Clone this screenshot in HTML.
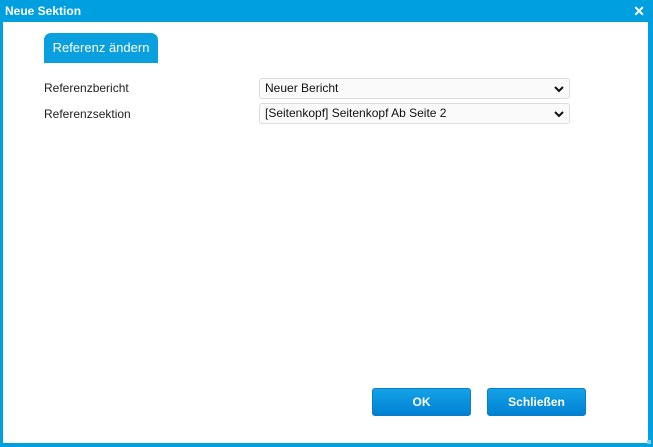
<!DOCTYPE html>
<html><head><style>
*{margin:0;padding:0;box-sizing:border-box}
body{width:653px;height:447px;background:#009fe0;font-family:"Liberation Sans",Arial,sans-serif;position:relative;overflow:hidden}
.title{position:absolute;left:5px;top:4px;color:#fff;font-weight:bold;font-size:12px}
.x{position:absolute;right:8px;top:3px;color:#fff;font-weight:bold;font-size:14px}
.main{position:absolute;left:3px;top:22px;width:645px;height:421px;background:#fff}
.tab{position:absolute;left:44px;top:33px;width:114px;height:30px;background:#0aa0df;border-radius:7px 7px 0 0;color:#fff;font-size:13px;text-align:center;line-height:30px}
.lbl{position:absolute;left:44px;font-size:12px;color:#222}
.sel{position:absolute;left:259px;width:311px;height:21px;border:1px solid #ddd;border-radius:3px;background:#fafafa;font-size:12px;color:#111;padding-left:5px;line-height:19px}
.sel svg{position:absolute;right:5px;top:6px}
.btn{position:absolute;top:388px;width:99px;height:28px;border-radius:3px;background:linear-gradient(#14a3e6,#0081d4);border:1px solid #0a7dc8;color:#fff;font-size:12px;font-weight:bold;text-align:center;line-height:26px}
.grip{position:absolute;left:647px;top:440px;width:4px;height:4px;background:#7fd0f0}
</style></head><body>
<div class="title">Neue Sektion</div>
<div class="x">✕</div>
<div class="main"></div>
<div class="tab">Referenz ändern</div>
<div class="lbl" style="top:81px">Referenzbericht</div>
<div class="lbl" style="top:107px">Referenzsektion</div>
<div class="sel" style="top:78px">Neuer Bericht<svg width="10" height="8" viewBox="0 0 10 8"><path d="M1 2l4 4 4-4" stroke="#111" stroke-width="2" fill="none"/></svg></div>
<div class="sel" style="top:103px">[Seitenkopf] Seitenkopf Ab Seite 2<svg width="10" height="8" viewBox="0 0 10 8"><path d="M1 2l4 4 4-4" stroke="#111" stroke-width="2" fill="none"/></svg></div>
<div class="btn" style="left:372px">OK</div>
<div class="btn" style="left:487px">Schließen</div>
<div class="grip"></div>
</body></html>
